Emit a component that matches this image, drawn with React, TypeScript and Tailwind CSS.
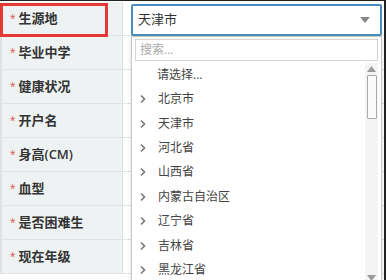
import React from "react";

const labels = ["生源地", "毕业中学", "健康状况", "开户名", "身高(CM)", "血型", "是否困难生", "现在年级"];
const options = ["北京市", "天津市", "河北省", "山西省", "内蒙古自治区", "辽宁省", "吉林省", "黑龙江省"];

const font = { fontFamily: '"Open Sans", "Noto Sans CJK SC", sans-serif' };

const Chevron: React.FC = () => (
  <svg width="8" height="10" viewBox="0 0 8 10" className="shrink-0">
    <path d="M2 1.5 L5.5 5 L2 8.5" fill="none" stroke="#777" strokeWidth="1.6" />
  </svg>
);

const App: React.FC = () => {
  return (
    <div className="relative w-[386px] h-[280px] overflow-hidden bg-white border-t border-r-2 border-[#222]" style={font}>
      <div className="pt-[1px]">
        {labels.map((l) => (
          <div key={l} className="flex h-[34px] border-b border-[#dfe5e5]">
            <div className="w-[123px] flex items-center pl-[8px] bg-[#eef2f2] border-l-2 border-r border-[#dde3e3] text-[13px] font-semibold text-[#333]">
              <span className="text-[#d9534f] text-[10px] mr-[3px] font-normal">*</span>
              {l}
            </div>
            <div className="flex-1" />
          </div>
        ))}
      </div>

      {/* red highlight on first label */}
      <div className="absolute left-0 top-[2px] w-[108px] h-[34px] border-[3px] border-[#e53935]" />

      {/* select */}
      <div className="absolute left-[131px] top-[3px] w-[251px] h-[32px] border-2 border-[#4a8cbd] rounded-[2px] bg-white flex items-center pl-[5px] pr-[10px]">
        <span className="flex-1 text-[13px] text-[#333]">天津市</span>
        <svg width="10" height="6" viewBox="0 0 10 6">
          <path d="M0 0 L10 0 L5 6 Z" fill="#888" />
        </svg>
      </div>

      {/* dropdown */}
      <div className="absolute left-[131px] top-[35px] w-[251px] h-[250px] bg-white border border-[#c8c8c8] shadow-[0_2px_4px_rgba(0,0,0,0.15)]">
        <div className="mx-[3px] mt-[2px] h-[22px] border border-[#d3d3d3] flex items-center pl-[4px] text-[12px] text-[#aaa]">
          搜索...
        </div>
        <div className="flex mt-[2px]">
          <div className="flex-1 text-[12px] text-[#444]">
            <div className="h-[24px] flex items-center pl-[25px]">请选择...</div>
            {options.map((o) => (
              <div key={o} className="h-[24.4px] flex items-center pl-[7px] gap-[11px]">
                <Chevron />
                <span>{o}</span>
              </div>
            ))}
          </div>
          <div className="w-[13px] mr-[3px] h-[218px] flex flex-col items-center bg-[#f4f4f4]">
            <svg width="9" height="6" viewBox="0 0 9 6" className="mt-[3px]">
              <path d="M0 6 L9 6 L4.5 0 Z" fill="#9a9a9a" />
            </svg>
            <div className="mt-[3px] w-[10px] h-[44px] border border-[#aaa] bg-[#fafafa] rounded-[1px]" />
            <div className="flex-1" />
            <svg width="9" height="6" viewBox="0 0 9 6">
              <path d="M0 0 L9 0 L4.5 6 Z" fill="#9a9a9a" />
            </svg>
          </div>
        </div>
      </div>
    </div>
  );
};

export default App;
